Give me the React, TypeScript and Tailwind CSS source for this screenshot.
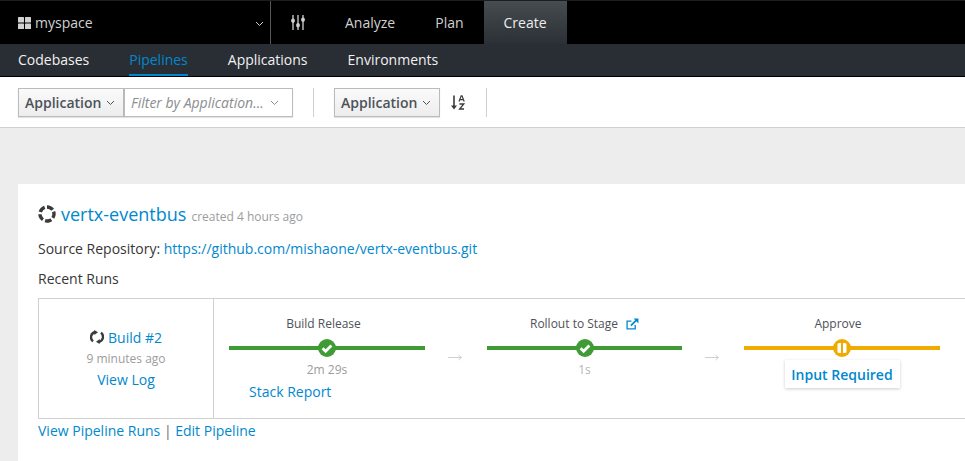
import React from "react";

const Check = () => (
  <svg width="18" height="18" viewBox="0 0 18 18" className="block">
    <circle cx="9" cy="9" r="9" fill="#3f9c35" />
    <path d="M4.6 9.2 L7.6 12.2 L13.4 6.4" fill="none" stroke="#fff" strokeWidth="2.8" />
  </svg>
);

const Pause = () => (
  <svg width="18" height="18" viewBox="0 0 18 18" className="block">
    <circle cx="9" cy="9" r="9" fill="#f0ab00" />
    <rect x="4.5" y="4" width="9" height="10" rx="1.5" fill="#fff" />
    <rect x="8" y="4" width="2" height="10" fill="#f0ab00" />
  </svg>
);

const Chevron = ({ className, color }: { className?: string; color: string }) => (
  <svg width="9" height="6" viewBox="0 0 9 6" className={className}>
    <path d="M1 1 L4.5 4.5 L8 1" fill="none" stroke={color} strokeWidth="1" />
  </svg>
);

const Arrow = () => (
  <svg width="15" height="7" viewBox="0 0 15 7" className="block">
    <path d="M0 3.5 H13.5 M10.5 1 L13.5 3.5 L10.5 6" fill="none" stroke="#cfcfcf" strokeWidth="1" />
  </svg>
);

function Stage({
  title,
  color,
  icon,
  extra,
  children,
  w,
  titleClass,
}: {
  title: React.ReactNode;
  color: string;
  icon: React.ReactNode;
  extra?: React.ReactNode;
  children?: React.ReactNode;
  w: string;
  titleClass?: string;
}) {
  return (
    <div className={`flex flex-col pt-[12px] ${w}`}>
      <div className={`h-[25px] flex items-center justify-center text-[12px] text-[#4d5258] leading-none ${titleClass ?? ""}`}>
        {title}
        {extra}
      </div>
      <div className="relative h-[18px] mt-[3px] flex items-center justify-center">
        <div className="absolute left-0 right-0 top-[7px] h-[4px]" style={{ background: color }} />
        <div className="relative">{icon}</div>
      </div>
      {children}
    </div>
  );
}

export default function App() {
  return (
    <div
      className="w-[965px] h-[461px] overflow-hidden bg-[#ededed] text-[14px] text-[#363636]"
      style={{ fontFamily: '"Open Sans", sans-serif' }}
    >
      {/* top bar */}
      <div className="h-[44px] bg-black flex border-t border-[#1d1d1d]">
        <div className="w-[270px] pl-[18px] pr-[6px] flex items-center text-[#d1d1d1] shrink-0">
          <svg width="13" height="12" viewBox="0 0 13 12" className="mr-[4px]">
            <rect x="0" y="0" width="6" height="5.5" rx="0.6" fill="#d1d1d1" />
            <rect x="7" y="0" width="6" height="5.5" rx="0.6" fill="#d1d1d1" />
            <rect x="0" y="6.5" width="6" height="5.5" rx="0.6" fill="#d1d1d1" />
            <rect x="7" y="6.5" width="6" height="5.5" rx="0.6" fill="#d1d1d1" />
          </svg>
          <span>myspace</span>
          <Chevron className="ml-auto mt-[2px]" color="#d1d1d1" />
        </div>
        <div className="w-px bg-[#53565b]" />
        <div className="w-[54px] flex items-center justify-center shrink-0">
          <svg width="14" height="15" viewBox="0 0 14 15" fill="none" stroke="#d1d1d1">
            <path d="M2 0V15M7 0V15M12 0V15" strokeWidth="1.3" />
            <rect x="0.6" y="4" width="2.8" height="3.4" rx="1" fill="#d1d1d1" strokeWidth="0.8" />
            <rect x="5.6" y="8.5" width="2.8" height="3.4" rx="1" fill="#d1d1d1" strokeWidth="0.8" />
            <rect x="10.6" y="3" width="2.8" height="3.4" rx="1" fill="#d1d1d1" strokeWidth="0.8" />
          </svg>
        </div>
        <div className="flex items-center px-[20px] text-[#d1d1d1] pb-[1px]">Analyze</div>
        <div className="flex items-center px-[20px] text-[#d1d1d1] pb-[1px]">Plan</div>
        <div className="flex items-center px-[20px] w-[83px] text-[#eeeeee] bg-gradient-to-b from-[#474c50] to-[#2b3036] pb-[1px]">
          Create
        </div>
      </div>

      {/* sub nav */}
      <div className="h-[33px] bg-[#292e34] border-b border-black flex pl-[18px] gap-[40px] text-[#f1f1f1]">
        <div className="flex items-center pb-[1px]">Codebases</div>
        <div className="relative flex items-center pb-[1px] text-[#0088ce]">
          Pipelines
          <div className="absolute left-0 right-0 bottom-0 h-[2px] bg-[#0088ce]" />
        </div>
        <div className="flex items-center pb-[1px]">Applications</div>
        <div className="flex items-center pb-[1px]">Environments</div>
      </div>

      {/* toolbar */}
      <div className="h-[51px] bg-white border-b border-[#d1d1d1] flex items-center pl-[18px]">
        <div className="h-[29px] w-[106px] flex items-center justify-between pl-[6px] pr-[8px] border border-[#bbbbbb] bg-gradient-to-b from-[#fafafa] to-[#ededed] font-semibold text-[#4d5258] shadow-[0_1px_1px_rgba(3,3,3,0.1)]">
          Application
          <Chevron className="mt-[2px]" color="#4d5258" />
        </div>
        <div className="h-[29px] w-[169px] flex items-center justify-between pl-[6px] pr-[13px] border border-[#bbbbbb] bg-white italic text-[#8b8d8f] shadow-[0_1px_1px_rgba(3,3,3,0.1)]">
          Filter by Application...
          <Chevron className="mt-[2px]" color="#8b8d8f" />
        </div>
        <div className="ml-[20px] w-px h-[29px] bg-[#d1d1d1]" />
        <div className="ml-[20px] h-[29px] w-[106px] flex items-center justify-between pl-[6px] pr-[8px] border border-[#bbbbbb] bg-gradient-to-b from-[#fafafa] to-[#ededed] font-semibold text-[#4d5258] shadow-[0_1px_1px_rgba(3,3,3,0.1)]">
          Application
          <Chevron className="mt-[2px]" color="#4d5258" />
        </div>
        <svg width="14" height="15" viewBox="0 0 14 15" className="ml-[11px]">
          <path d="M3 0.5V12" stroke="#3a3a3a" strokeWidth="1.6" />
          <path d="M0 10.5H6L3 14.5Z" fill="#3a3a3a" />
          <path d="M8 6.5L10.2 0.8H11L13.2 6.5M9 4.6H12.2" fill="none" stroke="#3a3a3a" strokeWidth="1.2" />
          <path d="M8.5 9H12.8L8.6 14H13" fill="none" stroke="#3a3a3a" strokeWidth="1.3" />
        </svg>
        <div className="ml-[21px] w-px h-[29px] bg-[#d1d1d1]" />
      </div>

      {/* card */}
      <div className="mt-[56px] ml-[18px] bg-white pl-[20px] pt-[17px] h-[300px]">
        <div className="flex items-center h-[26px]">
          <svg width="18" height="18" viewBox="0 0 18 18" fill="none" stroke="#3a3a3a" strokeWidth="3.4" className="mr-[5px]">
            <circle cx="9" cy="9" r="7" strokeDasharray="6.5 2.3" transform="rotate(-20 9 9)" />
          </svg>
          <a className="text-[18px] text-[#0088ce] leading-none">vertx-eventbus</a>
          <span className="ml-[5px] text-[12px] text-[#9c9c9c] mt-[6px]">created 4 hours ago</span>
        </div>
        <div className="mt-[12px] h-[20px] leading-[20px]">
          Source Repository: <a className="text-[#0088ce]">https://github.com/mishaone/vertx-eventbus.git</a>
        </div>
        <div className="mt-[10px] h-[20px] leading-[20px]">Recent Runs</div>

        <div className="mt-[9px] h-[121px] flex border border-r-0 border-[#d1d1d1]">
          <div className="w-[175px] shrink-0 border-r border-[#d1d1d1] flex flex-col items-center pt-[27px]">
            <div className="h-[22px] flex items-center text-[#0088ce]">
              <svg width="14" height="14" viewBox="0 0 14 14" fill="none" stroke="#3a3a3a" strokeWidth="2.4" className="mr-[4px]">
                <path d="M3 11.4A5.4 5.4 0 0 1 5 2" />
                <path d="M11 2.6A5.4 5.4 0 0 1 9 12" />
                <path d="M4.2 0 L8 2.2 L4.4 5Z" fill="#3a3a3a" stroke="none" />
                <path d="M9.8 9 L6 11.8 L9.6 14Z" fill="#3a3a3a" stroke="none" />
              </svg>
              Build #2
            </div>
            <div className="mt-[1px] h-[20px] leading-[20px] text-[12px] text-[#9c9c9c]">9 minutes ago</div>
            <a className="mt-[1px] h-[20px] leading-[20px] text-[#0088ce]">View Log</a>
          </div>

          <div className="flex pl-[15px] items-start">
            <Stage title="Build Release" color="#3f9c35" icon={<Check />} w="w-[196px]" titleClass="pr-[7px]">
              <div className="text-center text-[12px] text-[#9c9c9c] h-[20px] leading-[20px] mt-[3px]">2m 29s</div>
              <a className="ml-[20px] mt-[2px] h-[20px] leading-[20px] text-[#0088ce]">Stack Report</a>
            </Stage>
            <div className="w-[62px] pl-[23px] pt-[55px] shrink-0"><Arrow /></div>
            <Stage
              title="Rollout to Stage"
              color="#3f9c35"
              icon={<Check />}
              w="w-[195px]"
              extra={
                <svg width="13" height="12" viewBox="0 0 12 11" fill="none" stroke="#0088ce" strokeWidth="1.2" className="ml-[8px]">
                  <path d="M8.5 6.5V10H1V2.8H5" />
                  <path d="M4.5 7L10 1.5" strokeWidth="1.6" />
                  <path d="M7 0.5H11.5V5Z" fill="#0088ce" stroke="none" />
                </svg>
              }
            >
              <div className="text-center text-[12px] text-[#b5b5b5] h-[20px] leading-[20px] mt-[3px]">1s</div>
            </Stage>
            <div className="w-[62px] pl-[23px] pt-[55px] shrink-0"><Arrow /></div>
            <Stage title="Approve" color="#f0ab00" icon={<Pause />} w="w-[196px]" titleClass="pr-[8px]">
              <div className="mt-[3px] self-center h-[28px] w-[115px] flex items-center justify-center font-semibold text-[#0088ce] bg-white shadow-[0_1px_3px_rgba(3,3,3,0.2)]">
                Input Required
              </div>
            </Stage>
          </div>
        </div>

        <div className="mt-[2px] h-[20px] leading-[20px]">
          <a className="text-[#0088ce]">View Pipeline Runs</a>
          <span className="text-[#6a6a6a]"> | </span>
          <a className="text-[#0088ce]">Edit Pipeline</a>
        </div>
      </div>
    </div>
  );
}
